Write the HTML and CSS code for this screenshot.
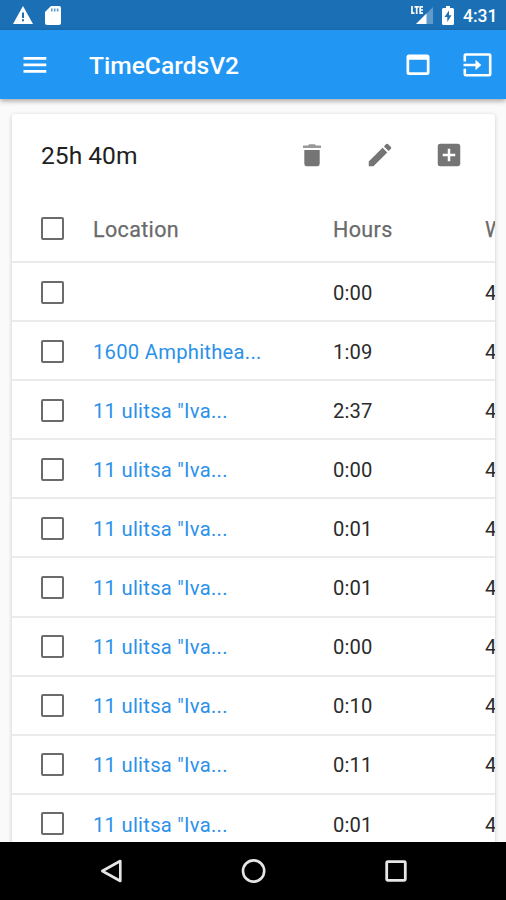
FILE: index.html
```html
<!DOCTYPE html>
<html lang="en">
<head>
<meta charset="utf-8">
<title>TimeCardsV2</title>
<link rel="stylesheet" href="styles.css">
</head>
<body>
<div class="status">
  <svg class="warn" width="20" height="18" viewBox="0 0 20 18"><path fill="#fff" d="M0 18 10 0l10 18z"/><path fill="#1b70b5" d="M9 6.500h2v5.500H9zM9 13.300h2v2H9z"/></svg>
  <svg class="sd" width="16" height="19" viewBox="0 0 16 19"><path fill="#fff" d="M6 0h8a2 2 0 0 1 2 2v15a2 2 0 0 1-2 2H2a2 2 0 0 1-2-2V6z"/><path fill="#1b70b5" d="M6 2.500h1.600v3H6zM8.900 2.500h1.600v3H8.900zM11.800 2.500h1.600v3h-1.600z" opacity=".7"/></svg>
  <svg class="signal" width="22" height="20" viewBox="0 0 22 20"><path fill="#fff" opacity=".3" d="M22 1v17H5z"/><path fill="#fff" d="M15.500 7.500V18H5z"/><path fill="none" stroke="#fff" stroke-width="1.700" d="M1 0v7.200h2.500M3.500.800h4.300M5.700.800V8M12 .800H9.200v6.400H12M9.200 4H12"/></svg>
  <svg class="battery" width="12" height="19" viewBox="0 0 12 19"><path fill="#fff" d="M4 0h4v2h2.500A1.500 1.500 0 0 1 12 3.500v14a1.500 1.500 0 0 1-1.500 1.500h-9A1.500 1.500 0 0 1 0 17.500v-14A1.500 1.500 0 0 1 1.500 2H4z"/><path fill="#1b70b5" d="M7 4.500 2.500 11H5.300v5L9.500 9.300H7z"/></svg>
  <span class="clock">4:31</span>
</div>
<header class="bar">
  <svg class="menu" width="24" height="17" viewBox="0 0 24 17"><path fill="#fff" d="M.500 0h22.800v2.800H.500zM.500 6.500h22.800v2.800H.500zM.500 13h22.800v2.800H.500z"/></svg>
  <h1 class="title">TimeCardsV2</h1>
  <svg class="window" width="24" height="22" viewBox="0 0 24 22"><path fill="#fff" fill-rule="evenodd" d="M3 .500h18a2.500 2.500 0 0 1 2.500 2.500v15.500A2.500 2.500 0 0 1 21 21H3a2.500 2.500 0 0 1-2.500-2.500V3A2.500 2.500 0 0 1 3 .500zM3.200 5.800v12.400h17.600v-12.400z"/></svg>
  <svg class="exit" width="29" height="24" viewBox="0 0 29 24"><path fill="none" stroke="#fff" stroke-width="2.600" stroke-linejoin="round" d="M1.800 8.500v-6a1 1 0 0 1 1-1h23.400a1 1 0 0 1 1 1v18.800a1 1 0 0 1-1 1H2.800a1 1 0 0 1-1-1v-5.600M.500 12H13"/><path fill="#fff" d="m12.500 6.800 5.800 5.200-5.800 5.200z"/></svg>
</header>
<main class="content">
  <section class="card">
    <div class="tools">
      <h2 class="total">25h 40m</h2>
      <svg class="trash" width="18" height="23" viewBox="0 0 18 23"><path fill="#757575" d="M1.300 6h15.400v13.800a2.600 2.600 0 0 1-2.600 2.500H3.900a2.600 2.600 0 0 1-2.600-2.500z"/><path fill="#999" d="M0 1.500h5L6.200.300h5.600L13 1.500h5v2.500H0z"/></svg>
      <svg class="pencil" width="30" height="30" viewBox="0 0 24 24"><path fill="#757575" d="M3 17.250V21h3.750L17.810 9.940l-3.750-3.750L3 17.250zM20.710 7.040a.996.996 0 0 0 0-1.410l-2.340-2.340a.996.996 0 0 0-1.410 0l-1.830 1.830 3.750 3.750 1.830-1.830z"/></svg>
      <svg class="add" width="30" height="30" viewBox="0 0 24 24"><path fill="#757575" d="M19 3H5a2 2 0 0 0-2 2v14a2 2 0 0 0 2 2h14c1.100 0 2-.9 2-2V5c0-1.100-.9-2-2-2zm-2 10h-4v4h-2v-4H7v-2h4V7h2v4h4v2z"/></svg>
    </div>
    <div class="row head"><i class="box"></i><span>Location</span><span>Hours</span><span>W</span></div>
    <div class="row"><i class="box"></i><a></a><span>0:00</span><span>4</span></div>
    <div class="row"><i class="box"></i><a>1600 Amphithea...</a><span>1:09</span><span>4</span></div>
    <div class="row"><i class="box"></i><a>11 ulitsa "Iva...</a><span>2:37</span><span>4</span></div>
    <div class="row"><i class="box"></i><a>11 ulitsa "Iva...</a><span>0:00</span><span>4</span></div>
    <div class="row"><i class="box"></i><a>11 ulitsa "Iva...</a><span>0:01</span><span>4</span></div>
    <div class="row"><i class="box"></i><a>11 ulitsa "Iva...</a><span>0:01</span><span>4</span></div>
    <div class="row"><i class="box"></i><a>11 ulitsa "Iva...</a><span>0:00</span><span>4</span></div>
    <div class="row"><i class="box"></i><a>11 ulitsa "Iva...</a><span>0:10</span><span>4</span></div>
    <div class="row"><i class="box"></i><a>11 ulitsa "Iva...</a><span>0:11</span><span>4</span></div>
    <div class="row"><i class="box"></i><a>11 ulitsa "Iva...</a><span>0:01</span><span>4</span></div>
  </section>
</main>
<nav class="nav">
  <svg width="24" height="26" viewBox="0 0 24 26"><path fill="none" stroke="#e6e6e6" stroke-width="2.600" stroke-linejoin="round" d="M20.300 3v20L2.300 13z"/></svg>
  <svg width="26" height="26" viewBox="0 0 26 26"><circle cx="12.600" cy="13" r="10.600" fill="none" stroke="#e6e6e6" stroke-width="2.600"/></svg>
  <svg width="24" height="24" viewBox="0 0 24 24"><rect x="2.700" y="2.700" width="18.600" height="18.600" rx="1" fill="none" stroke="#e6e6e6" stroke-width="2.800"/></svg>
</nav>
</body>
</html>
```
FILE: styles.css
```css
* { box-sizing: border-box; }
body {
  margin: 0;
  height: 900px;
  display: flex;
  flex-direction: column;
  overflow: hidden;
  background: #fafafa;
  font-family: Roboto, sans-serif;
}
svg { display: block; flex: none; }
.status {
  flex: none;
  height: 30px;
  display: flex;
  align-items: flex-start;
  padding: 6px 10px 0 13px;
  background: #1b70b5;
  color: #fff;
}
.sd { margin-left: 12px; }
.signal { margin-left: auto; }
.battery { margin-left: 9px; }
.clock {
  margin-left: 9px;
  font-size: 17.5px;
  line-height: 21px;
  font-weight: 500;
  width: 33px;
  white-space: nowrap;
}
.bar {
  flex: none;
  position: relative;
  height: 69px;
  display: flex;
  align-items: center;
  padding: 0 14px 0 23px;
  background: #2196f3;
  box-shadow: 0 2px 5px rgba(0, 0, 0, .35);
}
.menu { margin-top: 1px; }
.title {
  margin: 2px auto 0 42px;
  color: #fff;
  font-size: 24.6px;
  font-weight: 500;
  line-height: 30px;
}
.exit { margin-left: 33px; }
.content {
  flex: 1;
  min-height: 0;
  overflow: hidden;
  padding: 15px 11px 0 12px;
}
.card {
  height: 760px;
  overflow: hidden;
  background: #fff;
  border-radius: 3px;
  box-shadow: 0 1px 4px rgba(0, 0, 0, .2);
}
.tools {
  height: 82px;
  display: flex;
  align-items: center;
  padding: 0 31px 0 29px;
}
.total {
  margin: 2px auto 0 0;
  color: #212121;
  font-size: 24.6px;
  font-weight: 400;
  line-height: 30px;
}
.trash { margin-right: 1px; }
.pencil { margin-left: 43px; }
.add { margin-left: 39px; }
.row {
  width: 560px;
  height: 59.1px;
  display: grid;
  grid-template-columns: 52px 240px 152px 1fr;
  align-items: center;
  padding: 1px 0 0 29px;
  border-bottom: 2px solid #ebebeb;
  color: #2b2b2b;
  font-size: 20.2px;
  line-height: 24px;
  letter-spacing: .1px;
}
.row a, .row span { padding-top: 1.400px; }
.row a { color: #2b91e9; letter-spacing: .27px; }
.head {
  height: 67px;
  padding-top: 0;
  color: #6a6a6a;
  font-size: 21.5px;
  letter-spacing: .35px;
}
.head span { padding-top: 2px; -webkit-text-stroke: .25px #6a6a6a; }
.box {
  width: 23px;
  height: 23px;
  border: 2px solid #6b6b6b;
  border-radius: 2px;
}
.nav {
  flex: none;
  position: relative;
  height: 58px;
  display: flex;
  align-items: center;
  justify-content: space-between;
  padding: 0 98px 0 100px;
  background: #000;
}
```
